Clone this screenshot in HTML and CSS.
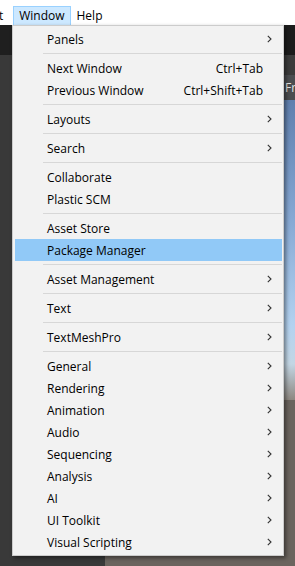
FILE: index.html
```html
<!DOCTYPE html>
<html lang="en">
<head>
  <meta charset="UTF-8" />
  <meta name="viewport" content="width=device-width, initial-scale=1" />
  <title>Window menu</title>
  <link rel="stylesheet" href="styles.css">
</head>
<body>

  <!-- Barra de menu -->
  <nav class="menubar">
    <span class="menubar-item first">Component</span>
    <span class="menubar-item open">Window</span>
    <span class="menubar-item">Help</span>
  </nav>

  <!-- Editor de fondo -->
  <div class="workspace">
    <div class="hierarchy">
      <div class="hierarchy-head"></div>
      <div class="hierarchy-body"></div>
    </div>
    <div class="scene">
      <div class="scene-tabs"></div>
      <div class="scene-toolbar"></div>
      <div class="scene-overlay"><span class="overlay-label">Free</span></div>
      <div class="scene-sky"></div>
      <div class="scene-ground"></div>
    </div>
  </div>

  <!-- Menu desplegable -->
  <div class="dropdown">
    <div class="item sub"><span class="label">Panels</span></div>
    <div class="sep"></div>
    <div class="item"><span class="label">Next Window</span><span class="shortcut">Ctrl+Tab</span></div>
    <div class="item"><span class="label">Previous Window</span><span class="shortcut">Ctrl+Shift+Tab</span></div>
    <div class="sep"></div>
    <div class="item sub"><span class="label">Layouts</span></div>
    <div class="sep"></div>
    <div class="item sub"><span class="label">Search</span></div>
    <div class="sep"></div>
    <div class="item"><span class="label">Collaborate</span></div>
    <div class="item"><span class="label">Plastic SCM</span></div>
    <div class="sep"></div>
    <div class="item"><span class="label">Asset Store</span></div>
    <div class="item active"><span class="label">Package Manager</span></div>
    <div class="sep"></div>
    <div class="item sub"><span class="label">Asset Management</span></div>
    <div class="sep"></div>
    <div class="item sub"><span class="label">Text</span></div>
    <div class="sep"></div>
    <div class="item sub"><span class="label">TextMeshPro</span></div>
    <div class="sep"></div>
    <div class="item sub"><span class="label">General</span></div>
    <div class="item sub"><span class="label">Rendering</span></div>
    <div class="item sub"><span class="label">Animation</span></div>
    <div class="item sub"><span class="label">Audio</span></div>
    <div class="item sub"><span class="label">Sequencing</span></div>
    <div class="item sub"><span class="label">Analysis</span></div>
    <div class="item sub"><span class="label">AI</span></div>
    <div class="item sub"><span class="label">UI Toolkit</span></div>
    <div class="item sub"><span class="label">Visual Scripting</span></div>
  </div>

  <script>
    // Flecha de submenu
    const arrow = '<svg width="5" height="8" viewBox="0 0 5 8"><path d="M0.8 0.8 L4 4 L0.8 7.2" fill="none" stroke="#333" stroke-width="1.1"/></svg>';
    document.querySelectorAll('.dropdown .item').forEach(item => {
      const slot = document.createElement('span');
      slot.className = 'arrow';
      if (item.classList.contains('sub')) slot.innerHTML = arrow;
      item.appendChild(slot);
    });
  </script>
</body>
</html>
```

FILE: styles.css
```css
body {
  margin: 0;
  padding: 0;
  width: 295px;
  height: 566px;
  overflow: hidden;
  background-color: #383838;
  font-family: 'Open Sans', 'Noto Sans', sans-serif;
  font-size: 12px;
  color: #000;
}

.menubar {
  display: flex;
  height: 25px;
  padding-top: 6px;
  box-sizing: border-box;
  background-color: #fff;
  overflow: hidden;
}

.menubar-item {
  padding: 0 5px;
  line-height: 18px;
  border: 1px solid transparent;
  border-bottom: none;
  white-space: nowrap;
}

.menubar-item.first {
  margin-left: -69px;
  padding-right: 9px;
}

.menubar-item.open {
  background-color: #cce8ff;
  border-color: #99d1ff;
}

.workspace {
  display: grid;
  grid-template-columns: 105px 1fr;
  height: 541px;
}

.hierarchy {
  display: flex;
  flex-direction: column;
  background-color: #383838;
}

.hierarchy-head {
  height: 30px;
  background-color: #1f1f1f;
}

.hierarchy-body {
  flex: 1;
  background-color: #393939;
}

.scene {
  display: flex;
  flex-direction: column;
}

.scene-tabs {
  height: 30px;
  background-color: #1c1c1c;
}

.scene-toolbar {
  height: 20px;
  background-color: #3c3c3c;
}

.scene-overlay {
  height: 25px;
  background-color: #4b4d50;
  overflow: hidden;
  white-space: nowrap;
}

.overlay-label {
  display: block;
  padding-left: 180px;
  line-height: 25px;
  color: #e6e6e6;
}

.scene-sky {
  height: 300px;
  background: linear-gradient(#5f7fae, #87a9d4 40%, #b3d2f0 75%, #c3d6e4 88%, #8d8780);
}

.scene-ground {
  flex: 1;
  background-color: #6b645e;
}

.dropdown {
  position: absolute;
  left: 12px;
  top: 25px;
  width: 272px;
  box-sizing: border-box;
  padding: 2px 0;
  background-color: #f2f2f2;
  border: 1px solid #cccccc;
  box-shadow: 2px 2px 4px rgba(0,0,0,0.45);
}

.item {
  display: flex;
  align-items: center;
  height: 22px;
  margin: 0 1px 0 2px;
  padding-left: 32px;
  white-space: nowrap;
}

.item.active {
  background-color: #91c9f7;
}

.label {
  flex: 1;
}

.shortcut {
  text-align: right;
}

.arrow {
  display: flex;
  align-items: center;
  width: 19px;
  height: 22px;
  padding-left: 4px;
  box-sizing: border-box;
}

.sep {
  height: 7px;
  margin: 0 1px 0 2px;
  padding-top: 3px;
  box-sizing: border-box;
}

.sep::after {
  content: '';
  display: block;
  margin-left: 28px;
  border-top: 1px solid #d7d7d7;
}
```
